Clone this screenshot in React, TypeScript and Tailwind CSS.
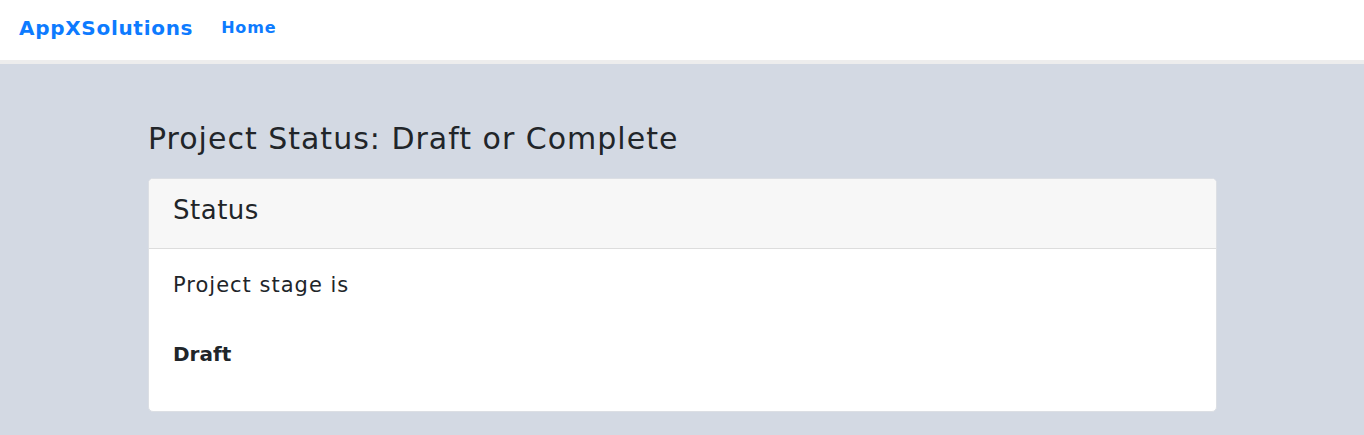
import React from 'react';

const font = { fontFamily: '"DejaVu Sans", "Open Sans", Arial, sans-serif' };

const App: React.FC = () => {
  return (
    <div className="min-h-screen bg-[#d3d9e3]" style={font}>
      {/* Top navigation */}
      <nav className="h-[64px] bg-white border-b-4 border-[#ededed] flex items-start pt-[14px] px-[19px]">
        <span className="text-[20px] leading-[28px] font-bold tracking-[0.7px] text-[#0d7bff]">AppXSolutions</span>
        <a className="ml-[28px] text-[16px] leading-[28px] font-bold tracking-[0.8px] text-[#0d7bff]">Home</a>
      </nav>

      <main className="w-[1069px] ml-[148px] pt-[57px]">
        <h3 className="text-[30px] leading-[36px] tracking-[1px] text-[#212529] mb-[21px]">Project Status: Draft or Complete</h3>

        <div className="bg-white rounded-[5px] border border-[#dcdfe4] overflow-hidden">
          <div className="bg-[#f7f7f7] border-b border-[#dddddd] px-[24px] pt-[16px] pb-[23px]">
            <h4 className="text-[26px] leading-[30px] tracking-[0.5px] text-[#212529]">Status</h4>
          </div>
          <div className="px-[24px] pt-[21px] pb-[42px] text-[#212529]">
            <p className="text-[21px] leading-[30px] tracking-[1px]">Project stage is</p>
            <p className="text-[20px] leading-[30px] font-bold mt-[39px]">Draft</p>
          </div>
        </div>
      </main>
    </div>
  );
};

export default App;
